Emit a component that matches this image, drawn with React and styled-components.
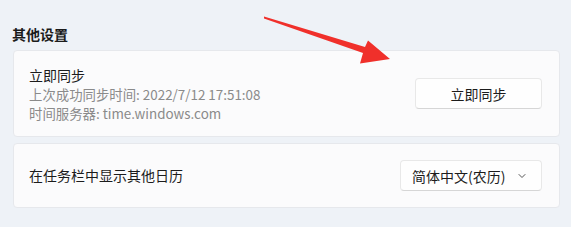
import styled, { createGlobalStyle } from "styled-components"

const GlobalStyle = createGlobalStyle`
  html, body {
    margin: 0;
    padding: 0;
    background: #eef2f7;
  }
  body {
    font-family: "Noto Sans", "Noto Sans CJK SC", sans-serif;
  }
`

export default function App() {
  return (
    <St.Page>
      <GlobalStyle />
      <St.Heading>其他设置</St.Heading>
      <St.CardList>
        <St.Card $height={87}>
          <St.TextBlock>
            <St.Title>立即同步</St.Title>
            <St.Sub>上次成功同步时间: 2022/7/12 17:51:08</St.Sub>
            <St.Sub>时间服务器: time.windows.com</St.Sub>
          </St.TextBlock>
          <St.Button>立即同步</St.Button>
        </St.Card>
        <St.Card $height={65}>
          <St.Title>在任务栏中显示其他日历</St.Title>
          <St.Select>
            <span>简体中文(农历)</span>
            <svg width="10" height="10" viewBox="0 0 10 10">
              <path d="M2 3.5 L5 6.5 L8 3.5" fill="none" stroke="#555" strokeWidth="1" strokeLinecap="round" strokeLinejoin="round" />
            </svg>
          </St.Select>
        </St.Card>
      </St.CardList>

      <St.Arrow width="571" height="227" viewBox="0 0 571 227">
        <polygon
          points="264,16.5 365,47 368,40.5 390,59 360,63.5 363,53 264,18.5"
          fill="#f0302b"
        />
      </St.Arrow>
    </St.Page>
  )
}

const St = {
  Page: styled.div`
    position: relative;
    width: 571px;
    height: 227px;
    padding: 25px 11px 0 13px;
    box-sizing: border-box;
    overflow: hidden;
  `,
  Heading: styled.div`
    font-family: "Noto Sans CJK SC", sans-serif;
    font-size: 14px;
    font-weight: bold;
    line-height: 19px;
    color: #1b1b1b;
    margin-left: -1px;
    margin-bottom: 6px;
  `,
  CardList: styled.div`
    display: flex;
    flex-direction: column;
    gap: 6px;
  `,
  Card: styled.div`
    height: ${(p) => p.$height}px;
    box-sizing: border-box;
    display: flex;
    align-items: center;
    justify-content: space-between;
    padding: 0 17px 0 15px;
    background: #fbfbfc;
    border: 1px solid #e6e8ec;
    border-radius: 4px;
  `,
  TextBlock: styled.div`
    display: flex;
    flex-direction: column;
    margin-top: 2px;
  `,
  Title: styled.div`
    font-family: "Noto Sans CJK SC", sans-serif;
    font-size: 14px;
    line-height: 19px;
    color: #1c1c1c;
  `,
  Sub: styled.div`
    font-family: "Noto Sans CJK SC", sans-serif;
    font-size: 13.4px;
    line-height: 19px;
    color: #8a8a8a;
  `,
  Button: styled.div`
    width: 127px;
    height: 31px;
    box-sizing: border-box;
    display: flex;
    align-items: center;
    justify-content: center;
    font-family: "Noto Sans CJK SC", sans-serif;
    font-size: 14px;
    color: #1c1c1c;
    background: #fefefe;
    border: 1px solid #e8e8e8;
    border-bottom-color: #d6d6d6;
    border-radius: 4px;
  `,
  Select: styled.div`
    width: 142px;
    height: 31px;
    box-sizing: border-box;
    display: flex;
    align-items: center;
    justify-content: space-between;
    padding: 0 14px 0 11px;
    font-family: "Noto Sans CJK SC", sans-serif;
    font-size: 14px;
    color: #1c1c1c;
    background: #fefefe;
    border: 1px solid #e8e8e8;
    border-bottom-color: #d6d6d6;
    border-radius: 4px;
  `,
  Arrow: styled.svg`
    position: absolute;
    left: 0;
    top: 0;
    pointer-events: none;
  `,
}
